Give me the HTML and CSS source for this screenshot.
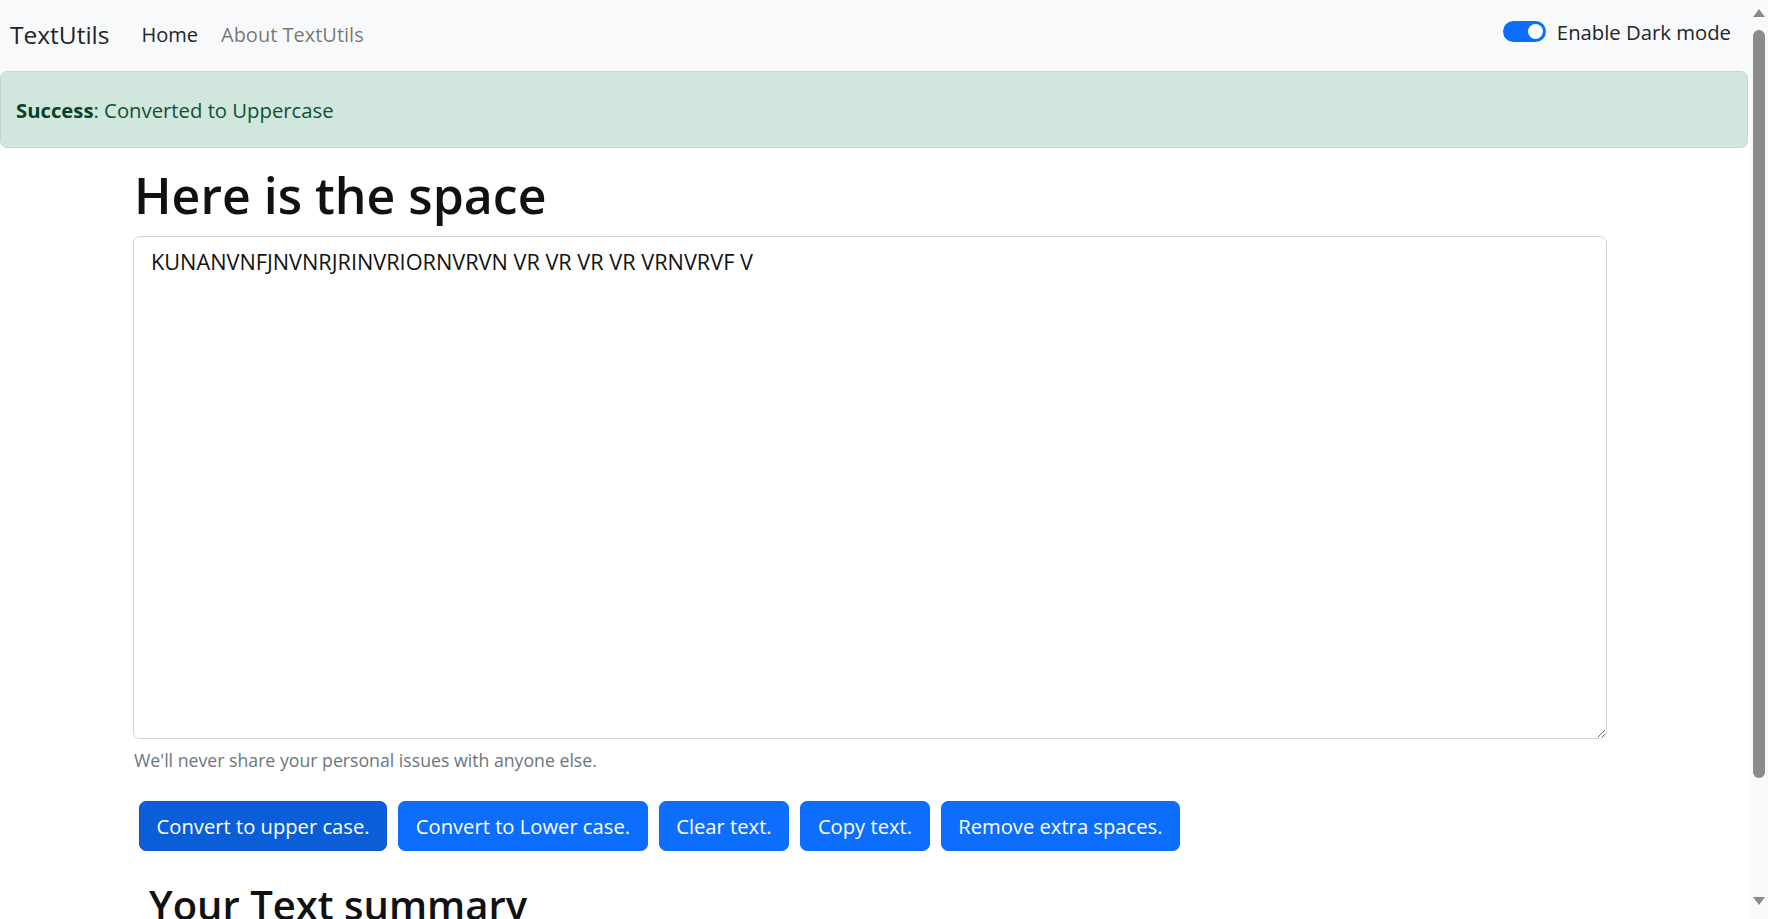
FILE: index.html
```html
<!DOCTYPE html>
<html lang="en">
<head>
<meta charset="utf-8">
<title>TextUtils</title>
<link rel="stylesheet" href="styles.css">
</head>
<body>
<div class="window">
  <div class="page">
    <nav class="navbar">
      <div class="nav-left">
        <a class="brand" href="#">TextUtils</a>
        <a class="nav-link active" href="#">Home</a>
        <a class="nav-link" href="#">About TextUtils</a>
      </div>
      <div class="nav-right">
        <svg class="switch" width="43" height="21" viewBox="0 0 43 21"><rect x="0" y="0" width="43" height="21" rx="10.5" fill="#0d6efd"/><circle cx="32.5" cy="10.5" r="7.5" fill="#fff"/></svg>
        <span class="switch-label">Enable Dark mode</span>
      </div>
    </nav>
    <div class="alert"><strong>Success</strong>: Converted to Uppercase</div>
    <div class="container">
      <h1 class="title">Here is the space</h1>
      <textarea class="textbox">KUNANVNFJNVNRJRINVRIORNVRVN VR VR VR VR VRNVRVF V</textarea>
      <div class="form-text">We'll never share your personal issues with anyone else.</div>
      <div class="btn-row">
        <button class="btn btn-active">Convert to upper case.</button>
        <button class="btn">Convert to Lower case.</button>
        <button class="btn">Clear text.</button>
        <button class="btn">Copy text.</button>
        <button class="btn">Remove extra spaces.</button>
      </div>
      <div class="summary">
        <h2 class="summary-title">Your Text summary</h2>
      </div>
    </div>
  </div>
  <div class="scrollbar">
    <svg class="arrow" width="12" height="8" viewBox="0 0 12 8"><polygon points="6,0 12,8 0,8" fill="#8a8a8a"/></svg>
    <div class="thumb"></div>
    <div class="spacer"></div>
    <svg class="arrow" width="12" height="8" viewBox="0 0 12 8"><polygon points="0,0 12,0 6,8" fill="#8a8a8a"/></svg>
  </div>
</div>
</body>
</html>
```

FILE: styles.css
```css
* { box-sizing: border-box; }
html, body { margin: 0; padding: 0; }
body {
  font-family: "Open Sans", "Noto Sans", sans-serif;
  color: #212529;
  background: #fff;
}
.window {
  display: flex;
  width: 1768px;
  height: 919px;
  overflow: hidden;
}
.page {
  width: 1750px;
  flex: 0 0 1750px;
  display: block;
}
.navbar {
  height: 71px;
  background: #f8f9fa;
  display: flex;
  align-items: center;
  justify-content: space-between;
  padding: 0 19px 0 10px;
}
.nav-left {
  display: flex;
  align-items: center;
  margin-bottom: 3px;
}
.brand {
  font-size: 24.5px;
  color: #212529;
  text-decoration: none;
  margin-right: 32px;
}
.nav-link {
  font-size: 20px;
  color: rgba(0,0,0,0.55);
  text-decoration: none;
  margin-right: 23px;
}
.nav-link.active { color: #212529; }
.nav-right {
  display: flex;
  align-items: center;
  gap: 11px;
  margin-bottom: 8px;
}
.switch { display: block; }
.switch-label { font-size: 20.3px; color: #212529; }
.alert {
  width: 1748px;
  height: 77px;
  background: #d1e7dd;
  border: 1px solid #badbcc;
  border-radius: 7px;
  color: #0f5132;
  font-size: 20.3px;
  display: flex;
  align-items: center;
  padding: 0 15px;
}
.alert strong { font-weight: 700; color: #0c4128; }
.container {
  padding-left: 133px;
  display: flex;
  flex-direction: column;
  align-items: flex-start;
}
.title {
  font-size: 50px;
  font-weight: 600;
  line-height: 60px;
  margin: 17px 0 11px 1px;
  color: #111;
}
.textbox {
  display: block;
  width: 1474px;
  height: 503px;
  flex-shrink: 0;
  border: 1px solid #ced4da;
  border-radius: 7px;
  padding: 9px 17px;
  font-family: "Open Sans", "Noto Sans", sans-serif;
  font-size: 21.7px;
  line-height: 1.5;
  color: #111;
  background: #fff;
  resize: vertical;
  outline: none;
}
.form-text {
  font-size: 17.7px;
  color: #6c757d;
  margin-top: 9px;
  padding-left: 1px;
}
.btn-row {
  display: flex;
  gap: 11px;
  margin: 29px 0 0 6px;
}
.btn {
  height: 50px;
  padding: 0 16.6px;
  border: 1px solid #0d6efd;
  background: #0d6efd;
  color: #fff;
  border-radius: 7px;
  font-family: "Open Sans", "Noto Sans", sans-serif;
  font-size: 20.2px;
}
.btn-active { background: #0b5ed7; border-color: #0a58ca; }
.summary { padding-left: 16px; }
.summary-title {
  font-size: 40px;
  font-weight: 600;
  line-height: 1.2;
  margin: 30px 0 0 0;
  white-space: nowrap;
  color: #111;
}
.scrollbar {
  width: 18px;
  flex: 0 0 18px;
  background: #f9f9f9;
  display: flex;
  flex-direction: column;
  align-items: center;
  padding: 9px 0 14px 0;
}
.arrow { display: block; flex-shrink: 0; }
.thumb {
  width: 12px;
  height: 748px;
  flex-shrink: 0;
  margin-top: 13px;
  background: #8b8b8b;
  border-radius: 6px;
}
.spacer { flex: 1; }
```
